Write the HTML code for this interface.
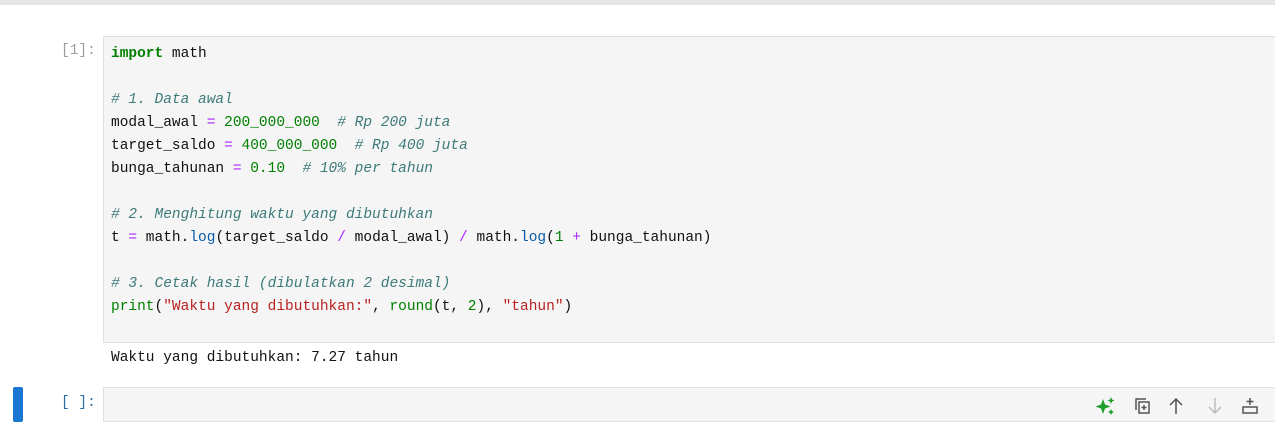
<!DOCTYPE html>
<html><head><style>
body{margin:0;width:1275px;height:433px;background:#fff;position:relative;overflow:hidden;font-family:"Liberation Mono",monospace;}
.top{position:absolute;left:0;top:0;width:1275px;height:5px;background:#e6e6e6;}
.prompt{position:absolute;font-size:14.5px;color:#9e9e9e;}
.box{position:absolute;left:103px;width:1172px;background:#f5f5f5;border:1px solid #e0e0e0;border-right:none;box-sizing:border-box;}
pre{margin:0;font-family:"Liberation Mono",monospace;font-size:14.5px;line-height:23px;color:#111;}
.k{color:#008000;font-weight:bold}.c{color:#3d7a7a;font-style:italic}.o{color:#aa22ff;}.n{color:#008000}.f{color:#0b5bab}.s{color:#ba2121}.b{color:#008000}
</style></head><body>
<div class="top"></div>
<div class="prompt" style="left:61px;top:43px;">[1]:</div>
<div class="box" style="top:36px;height:307px;">
<pre style="position:absolute;left:7px;top:6px;"><span class="k">import</span> math

<span class="c"># 1. Data awal</span>
modal_awal <span class="o">=</span> <span class="n">200_000_000</span>  <span class="c"># Rp 200 juta</span>
target_saldo <span class="o">=</span> <span class="n">400_000_000</span>  <span class="c"># Rp 400 juta</span>
bunga_tahunan <span class="o">=</span> <span class="n">0.10</span>  <span class="c"># 10% per tahun</span>

<span class="c"># 2. Menghitung waktu yang dibutuhkan</span>
t <span class="o">=</span> math<span>.</span><span class="f">log</span>(target_saldo <span class="o">/</span> modal_awal) <span class="o">/</span> math.<span class="f">log</span>(<span class="n">1</span> <span class="o">+</span> bunga_tahunan)

<span class="c"># 3. Cetak hasil (dibulatkan 2 desimal)</span>
<span class="b">print</span>(<span class="s">"Waktu yang dibutuhkan:"</span>, <span class="b">round</span>(t, <span class="n">2</span>), <span class="s">"tahun"</span>)</pre>
</div>
<pre style="position:absolute;left:111px;top:347px;">Waktu yang dibutuhkan: 7.27 tahun</pre>
<div style="position:absolute;left:13px;top:387px;width:10px;height:35px;background:#1976d2;border-radius:2px;"></div>
<div class="prompt" style="left:61px;top:395px;color:#2f6fa8;">[ ]:</div>
<div class="box" style="top:387px;height:35px;"></div>
<svg style="position:absolute;left:1094px;top:395px" width="170" height="22" viewBox="0 0 170 22">
<path d="M9 4 L11 9.5 L16.5 11.5 L11 13.5 L9 19 L7 13.5 L1.5 11.5 L7 9.5Z" fill="#1f9e2e"/>
<path d="M17 2 L18 4.5 L20.5 5.5 L18 6.5 L17 9 L16 6.5 L13.5 5.5 L16 4.5Z" fill="#1f9e2e"/>
<path d="M17 14 L18 16 L20 17 L18 18 L17 20 L16 18 L14 17 L16 16Z" fill="#1f9e2e"/>
<g fill="none" stroke="#555" stroke-width="1.5">
<rect x="45" y="7" width="10" height="11"/><path d="M42 15 V4 H52"/><path d="M50 10 V15 M47.5 12.5 H52.5"/>
<path d="M82 19 V4 M76 10 L82 4 L88 10"/>
</g>
<path d="M121 3 V18 M115 12 L121 18 L127 12" fill="none" stroke="#bbb" stroke-width="1.5"/>
<g fill="none" stroke="#555" stroke-width="1.5"><rect x="149" y="12" width="14" height="6"/><path d="M156 3 V10 M152.5 6.5 H159.5"/></g>
</svg>
</body></html>
